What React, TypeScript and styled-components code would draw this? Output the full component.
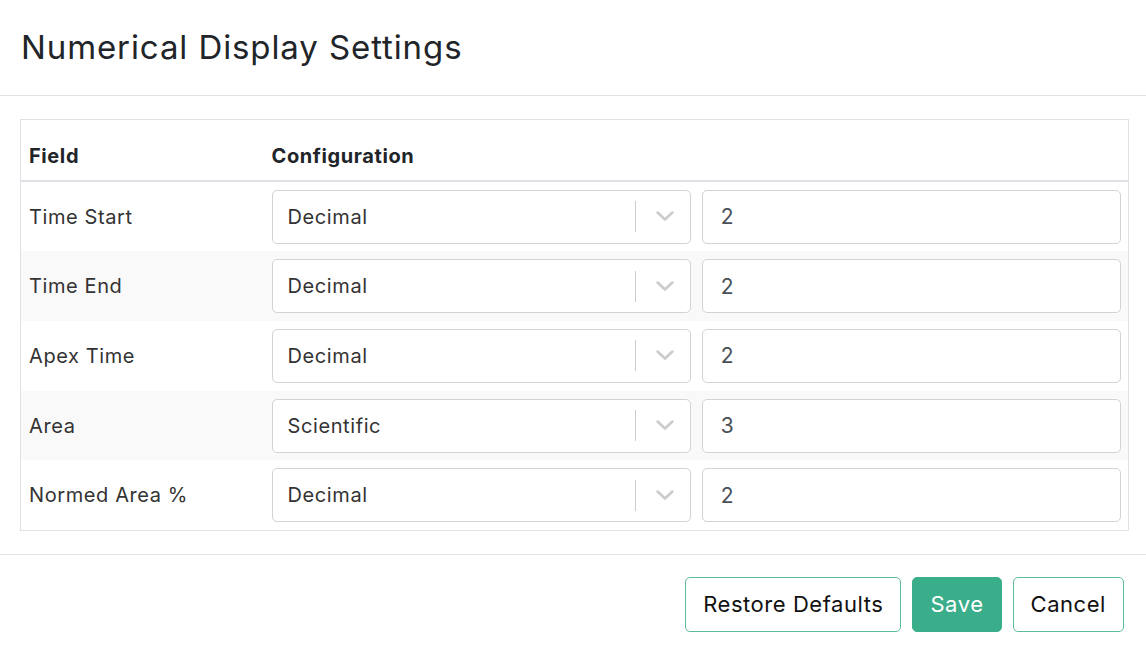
import styled, { createGlobalStyle } from 'styled-components';

const GlobalStyle = createGlobalStyle`
  html, body {
    margin: 0;
    padding: 0;
    background: #ffffff;
  }
  body {
    font-family: Inter, "Noto Sans", "Liberation Sans", sans-serif;
    color: #212529;
  }
  * { box-sizing: border-box; }
`;

type Row = { field: string; format: string; digits: number };

const rows: Row[] = [
  { field: 'Time Start', format: 'Decimal', digits: 2 },
  { field: 'Time End', format: 'Decimal', digits: 2 },
  { field: 'Apex Time', format: 'Decimal', digits: 2 },
  { field: 'Area', format: 'Scientific', digits: 3 },
  { field: 'Normed Area %', format: 'Decimal', digits: 2 },
];

const Dialog = styled.div`
  width: 1146px;
  height: 648px;
  display: flex;
  flex-direction: column;
  background: #fff;
`;

const Header = styled.div`
  height: 96px;
  display: flex;
  align-items: center;
  padding: 0 21px 2px;
  border-bottom: 1px solid #dee2e6;
`;

const Title = styled.h2`
  margin: 0;
  font-size: 33px;
  font-weight: 400;
  letter-spacing: 0.9px;
  color: #212529;
`;

const Body = styled.div`
  padding: 23px 17px 23px 20px;
`;

const Table = styled.table`
  width: 100%;
  border-collapse: collapse;
  border: 1px solid #dee2e6;
  font-size: 20px;
  letter-spacing: 0.6px;
`;

const HeadCell = styled.th<{ $width?: number }>`
  text-align: left;
  font-weight: 700;
  height: 61px;
  padding: 13px 8px 0;
  border-bottom: 2px solid #dee2e6;
  width: ${(p) => (p.$width ? `${p.$width}px` : 'auto')};
  color: #212529;
`;

const BodyRow = styled.tr<{ $striped: boolean }>`
  background: ${(p) => (p.$striped ? '#f9f9f9' : '#fff')};
  & + & td {
    border-top: 1px solid #dee2e6;
  }
`;

const Cell = styled.td`
  padding: 8px 7px 7.7px 8px;
  vertical-align: middle;
  color: #333;
`;

const ConfigRow = styled.div`
  display: grid;
  grid-template-columns: minmax(0, 1fr) minmax(0, 1fr);
  gap: 11px;
`;

const Select = styled.div`
  height: 54px;
  display: flex;
  align-items: center;
  background: #fff;
  border: 1px solid #d3d3d3;
  border-radius: 5px;
`;

const SelectValue = styled.div`
  flex: 1;
  padding-left: 15px;
  color: #333;
`;

const Separator = styled.span`
  width: 1px;
  height: 31px;
  background: #ccc;
`;

const Indicator = styled.div`
  width: 54px;
  display: flex;
  justify-content: center;
  align-items: center;
  padding-left: 4px;
  color: #ccc;
`;

const NumberInput = styled.div`
  height: 54px;
  display: flex;
  align-items: center;
  padding-left: 18px;
  border: 1px solid #d3d3d3;
  border-radius: 5px;
  background: #fff;
  color: #495057;
  font-size: 21px;
`;

const Footer = styled.div`
  border-top: 1px solid #dee2e6;
  display: flex;
  justify-content: flex-end;
  gap: 11px;
  padding: 22px 22px 0;
`;

const Button = styled.button<{ $primary?: boolean }>`
  height: 55px;
  padding: 0 17px;
  font-family: inherit;
  font-size: 22px;
  letter-spacing: 0.55px;
  border-radius: 5px;
  border: 1px solid ${(p) => (p.$primary ? '#3aae8a' : '#5cbd9c')};
  background: ${(p) => (p.$primary ? '#3aae8a' : '#fff')};
  color: ${(p) => (p.$primary ? '#fff' : '#111')};
`;

function Chevron() {
  return (
    <svg width="18" height="11" viewBox="0 0 18 11" fill="none" aria-hidden="true">
      <path d="M1.6 1.6 L9 8.6 L16.4 1.6" stroke="currentColor" strokeWidth="2.7" strokeLinecap="round" strokeLinejoin="round" />
    </svg>
  );
}

export default function App() {
  return (
    <>
      <GlobalStyle />
      <Dialog>
        <Header>
          <Title>Numerical Display Settings</Title>
        </Header>
        <Body>
          <Table>
            <thead>
              <tr>
                <HeadCell $width={243}>Field</HeadCell>
                <HeadCell>Configuration</HeadCell>
              </tr>
            </thead>
            <tbody>
              {rows.map((r, i) => (
                <BodyRow key={r.field} $striped={i % 2 === 1}>
                  <Cell>{r.field}</Cell>
                  <Cell>
                    <ConfigRow>
                      <Select>
                        <SelectValue>{r.format}</SelectValue>
                        <Separator />
                        <Indicator>
                          <Chevron />
                        </Indicator>
                      </Select>
                      <NumberInput>{r.digits}</NumberInput>
                    </ConfigRow>
                  </Cell>
                </BodyRow>
              ))}
            </tbody>
          </Table>
        </Body>
        <Footer>
          <Button>Restore Defaults</Button>
          <Button $primary>Save</Button>
          <Button>Cancel</Button>
        </Footer>
      </Dialog>
    </>
  );
}
